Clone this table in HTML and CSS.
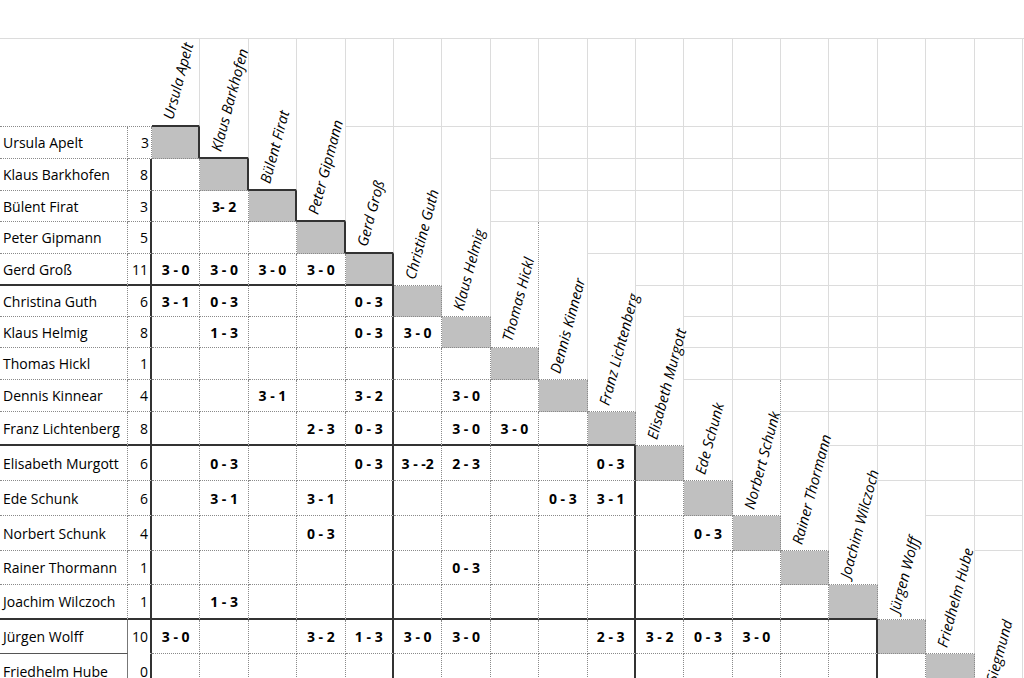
FILE: index.html
```html
<!DOCTYPE html>
<html lang="de">
<head>
<meta charset="utf-8">
<title>Kreuztabelle</title>
<link rel="stylesheet" href="styles.css">
</head>
<body>
<div class="sheet">
<!-- row 0 -->
<div class="nh"></div>
<div class="h bb"><span class="t">Ursula Apelt</span></div>
<div class="h sp2 bb"><span class="t">Klaus Barkhofen</span></div>
<div class="h sp3 bb"><span class="t">Bülent Firat</span></div>
<div class="h sp4 bb"><span class="t">Peter Gipmann</span></div>
<div class="e"></div><div class="e"></div><div class="e"></div><div class="e"></div><div class="e"></div><div class="e"></div><div class="e"></div><div class="e"></div><div class="e"></div><div class="e"></div><div class="e"></div><div class="e"></div><div class="e"></div><div class="e"></div>
<!-- row 1 -->
<div class="n">Ursula Apelt</div><div class="s">3</div>
<div class="g br"></div>
<div class="h sp4 bb"><span class="t">Gerd Groß</span></div>
<div class="h sp5"><span class="t">Christine Guth</span></div>
<div class="h sp6"><span class="t">Klaus Helmig</span></div>
<div class="e"></div><div class="e"></div><div class="e"></div><div class="e"></div><div class="e"></div><div class="e"></div><div class="e"></div><div class="e"></div><div class="e"></div><div class="e"></div><div class="e"></div>
<!-- row 2 -->
<div class="n">Klaus Barkhofen</div><div class="s br">8</div>
<div class="r"></div><div class="g br"></div>
<div class="e"></div><div class="e"></div><div class="e"></div><div class="e"></div><div class="e"></div><div class="e"></div><div class="e"></div><div class="e"></div><div class="e"></div><div class="e"></div><div class="e"></div>
<!-- row 3 -->
<div class="n">Bülent Firat</div><div class="s br">3</div>
<div class="r"></div><div class="r">3- 2</div><div class="g br"></div>
<div class="e"></div><div class="e"></div><div class="e"></div><div class="e"></div><div class="e"></div><div class="e"></div><div class="e"></div><div class="e"></div><div class="e"></div><div class="e"></div><div class="e"></div>
<!-- row 4 -->
<div class="n">Peter Gipmann</div><div class="s br">5</div>
<div class="r"></div><div class="r"></div><div class="r"></div><div class="g br"></div>
<div class="h sp4 dr"><span class="t">Thomas Hickl</span></div>
<div class="h sp5"><span class="t">Dennis Kinnear</span></div>
<div class="e"></div><div class="e"></div><div class="e"></div><div class="e"></div><div class="e"></div><div class="e"></div><div class="e"></div><div class="e"></div><div class="e"></div>
<!-- row 5 -->
<div class="n bb">Gerd Groß</div><div class="s br bb">11</div>
<div class="r bb">3 - 0</div><div class="r bb">3 - 0</div><div class="r bb">3 - 0</div><div class="r bb">3 - 0</div><div class="g br bb"></div>
<div class="h sp5"><span class="t">Franz Lichtenberg</span></div>
<div class="e"></div><div class="e"></div><div class="e"></div><div class="e"></div><div class="e"></div><div class="e"></div><div class="e"></div><div class="e"></div>
<!-- row 6 -->
<div class="n">Christina Guth</div><div class="s br">6</div>
<div class="r">3 - 1</div><div class="r">0 - 3</div><div class="r"></div><div class="r"></div><div class="r br">0 - 3</div><div class="g"></div>
<div class="h sp5"><span class="t">Elisabeth Murgott</span></div>
<div class="e"></div><div class="e"></div><div class="e"></div><div class="e"></div><div class="e"></div><div class="e"></div><div class="e"></div>
<!-- row 7 -->
<div class="n">Klaus Helmig</div><div class="s br">8</div>
<div class="r"></div><div class="r">1 - 3</div><div class="r"></div><div class="r"></div><div class="r br">0 - 3</div><div class="r">3 - 0</div><div class="g"></div>
<div class="e"></div><div class="e"></div><div class="e"></div><div class="e"></div><div class="e"></div><div class="e"></div><div class="e"></div>
<!-- row 8 -->
<div class="n">Thomas Hickl</div><div class="s br">1</div>
<div class="r"></div><div class="r"></div><div class="r"></div><div class="r"></div><div class="r br"></div><div class="r"></div><div class="r"></div><div class="g"></div>
<div class="e"></div><div class="e"></div><div class="e"></div><div class="e"></div><div class="e"></div><div class="e"></div><div class="e"></div>
<!-- row 9 -->
<div class="n">Dennis Kinnear</div><div class="s br">4</div>
<div class="r"></div><div class="r"></div><div class="r">3 - 1</div><div class="r"></div><div class="r br">3 - 2</div><div class="r"></div><div class="r">3 - 0</div><div class="r"></div><div class="g"></div>
<div class="h sp3"><span class="t">Ede Schunk</span></div>
<div class="h sp4 dr"><span class="t">Norbert Schunk</span></div>
<div class="e"></div><div class="e"></div><div class="e"></div><div class="e"></div><div class="e"></div>
<!-- row 10 -->
<div class="n bb">Franz Lichtenberg</div><div class="s br bb">8</div>
<div class="r bb"></div><div class="r bb"></div><div class="r bb"></div><div class="r bb">2 - 3</div><div class="r br bb">0 - 3</div><div class="r bb"></div><div class="r bb">3 - 0</div><div class="r bb">3 - 0</div><div class="r bb"></div><div class="g bb"></div>
<div class="h sp4"><span class="t">Rainer Thormann</span></div>
<div class="e"></div><div class="e"></div><div class="e"></div><div class="e"></div>
<!-- row 11 -->
<div class="n">Elisabeth Murgott</div><div class="s br">6</div>
<div class="r"></div><div class="r">0 - 3</div><div class="r"></div><div class="r"></div><div class="r br">0 - 3</div><div class="r">3 - -2</div><div class="r">2 - 3</div><div class="r"></div><div class="r"></div><div class="r br">0 - 3</div><div class="g"></div>
<div class="h sp4"><span class="t">Joachim Wilczoch</span></div>
<div class="e"></div><div class="e"></div><div class="e"></div>
<!-- row 12 -->
<div class="n">Ede Schunk</div><div class="s br">6</div>
<div class="r"></div><div class="r">3 - 1</div><div class="r"></div><div class="r">3 - 1</div><div class="r br"></div><div class="r"></div><div class="r"></div><div class="r"></div><div class="r">0 - 3</div><div class="r br">3 - 1</div><div class="r"></div><div class="g"></div>
<div class="h sp4"><span class="t">Jürgen Wolff</span></div>
<div class="e"></div><div class="e"></div>
<!-- row 13 -->
<div class="n">Norbert Schunk</div><div class="s br">4</div>
<div class="r"></div><div class="r"></div><div class="r"></div><div class="r">0 - 3</div><div class="r br"></div><div class="r"></div><div class="r"></div><div class="r"></div><div class="r"></div><div class="r br"></div><div class="r"></div><div class="r">0 - 3</div><div class="g"></div>
<div class="h sp4"><span class="t">Friedhelm Hube</span></div>
<div class="e"></div>
<!-- row 14 -->
<div class="n">Rainer Thormann</div><div class="s br">1</div>
<div class="r"></div><div class="r"></div><div class="r"></div><div class="r"></div><div class="r br"></div><div class="r"></div><div class="r">0 - 3</div><div class="r"></div><div class="r"></div><div class="r br"></div><div class="r"></div><div class="r"></div><div class="r"></div><div class="g"></div>
<div class="h sp4"><span class="t">Siegmund</span></div>
<!-- row 15 -->
<div class="n bb">Joachim Wilczoch</div><div class="s br bb">1</div>
<div class="r bb"></div><div class="r bb">1 - 3</div><div class="r bb"></div><div class="r bb"></div><div class="r br bb"></div><div class="r bb"></div><div class="r bb"></div><div class="r bb"></div><div class="r bb"></div><div class="r br bb"></div><div class="r bb"></div><div class="r bb"></div><div class="r bb"></div><div class="r bb"></div><div class="g bb"></div>
<!-- row 16 -->
<div class="n j">Jürgen Wolff</div><div class="s br nb">10</div>
<div class="r">3 - 0</div><div class="r"></div><div class="r"></div><div class="r">3 - 2</div><div class="r br">1 - 3</div><div class="r">3 - 0</div><div class="r">3 - 0</div><div class="r"></div><div class="r"></div><div class="r br">2 - 3</div><div class="r">3 - 2</div><div class="r">0 - 3</div><div class="r">3 - 0</div><div class="r"></div><div class="r br"></div><div class="g"></div>
<!-- row 17 -->
<div class="n j2">Friedhelm Hube</div><div class="s br">0</div>
<div class="r"></div><div class="r"></div><div class="r"></div><div class="r"></div><div class="r br"></div><div class="r"></div><div class="r"></div><div class="r"></div><div class="r"></div><div class="r br"></div><div class="r"></div><div class="r"></div><div class="r"></div><div class="r"></div><div class="r br"></div><div class="r"></div><div class="g"></div>
</div>
</body>
</html>
```

FILE: styles.css
```css
* {
  box-sizing: border-box;
}

html,
body {
  margin: 0;
  padding: 0;
  background: #ffffff;
  overflow: hidden;
}

body {
  width: 1024px;
  height: 678px;
  font-family: "Open Sans", "Liberation Sans", sans-serif;
  font-size: 14px;
  color: #000000;
}

.sheet {
  margin-top: 38px;
  border-top: 1px solid #dcdcdc;
  width: 1024px;
  display: grid;
  grid-template-columns: 128px 24px repeat(18, 48.4px);
  grid-template-rows: 88px 32px 32px 31px 32px 32px 31px 31px 32px 32px 34px 35px 35px 35px 34px 35px 34px 35px;
}

.sheet > div {
  display: flex;
  align-items: center;
  white-space: nowrap;
  min-width: 0;
  border-right: 1px dotted #8a8a8a;
  border-bottom: 1px dotted #8a8a8a;
}

.nh {
  grid-column: span 2;
  border-right: 0 !important;
}

.e {
  border-right: 1px solid #dcdcdc !important;
  border-bottom: 1px solid #dcdcdc !important;
}

.h {
  align-items: flex-end !important;
  padding: 0 0 4px 24px;
  border-right: 1px solid #dcdcdc !important;
}

.h .t {
  display: block;
  font-style: italic;
  font-size: 14.6px;
  line-height: 18px;
  transform-origin: 0 100%;
  transform: rotate(-75deg);
}

.sp2 { grid-row: span 2; }
.sp3 { grid-row: span 3; }
.sp4 { grid-row: span 4; }
.sp5 { grid-row: span 5; }
.sp6 { grid-row: span 6; }

.n {
  padding-left: 3px;
}

.s {
  justify-content: flex-end;
  padding-right: 2px;
}

.r {
  justify-content: center;
  font-weight: 700;
}

.g {
  background: #c0c0c0;
}

.sheet > .bb {
  border-bottom: 2px solid #333333;
}

.sheet > .br {
  border-right: 2px solid #333333;
}

.sheet > .h.dr {
  border-right: 1px dotted #9a9a9a !important;
}

.sheet > .j {
  border-right: 1px solid #777777;
  border-bottom: 1px solid #555555;
}

.sheet > .j2 {
  border-right: 1px solid #777777;
}

.sheet > .nb {
  border-bottom-color: transparent;
}
```
